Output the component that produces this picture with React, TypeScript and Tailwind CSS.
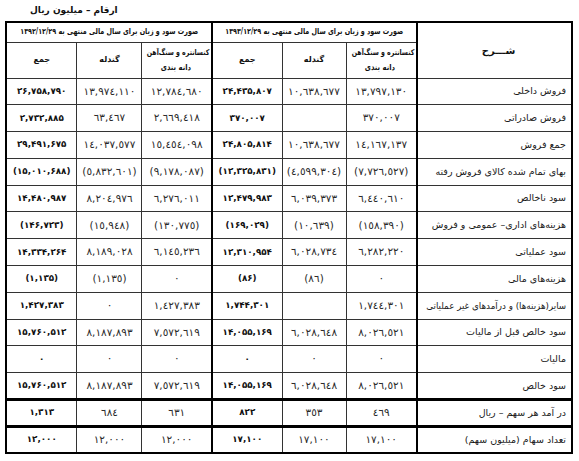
import React from "react";

const AR = "٠١٢٣٤٥٦٧٨٩";
const FA = "۰۱۲۳۴۵۶۷۸۹";
const toAr = (s: string) => s.replace(/[0-9]/g, (d) => AR[+d]);
const toFa = (s: string) => s.replace(/[0-9]/g, (d) => FA[+d]);

type Row = { l: string; v: string[]; thick?: boolean; narrow?: boolean };

const rows: Row[] = [
  { l: "فروش داخلی", v: ["13,797,130", "10,638,677", "24,435,807", "12,784,680", "13,974,110", "26,758,790"] },
  { l: "فروش صادراتی", v: ["370,007", "", "370,007", "2,669,418", "63,467", "2,732,885"] },
  { l: "جمع فروش", v: ["14,167,137", "10,638,677", "24,805,814", "15,454,098", "14,037,577", "29,491,675"] },
  { l: "بهای تمام شده کالای فروش رفته", v: ["(7,726,527)", "(4,599,304)", "(12,325,831)", "(9,178,087)", "(5,832,601)", "(15,010,688)"] },
  { l: "سود ناخالص", v: ["6,440,610", "6,039,373", "12,479,983", "6,276,011", "8,204,976", "14,480,987"] },
  { l: "هزینه‌های اداری– عمومی و فروش", v: ["(158,390)", "(10,639)", "(169,029)", "(130,775)", "(15,948)", "(146,723)"] },
  { l: "سود عملیاتی", v: ["6,282,220", "6,028,734", "12,310,954", "6,145,236", "8,189,028", "14,334,264"] },
  { l: "هزینه‌های مالی", v: ["0", "(86)", "(86)", "0", "(1,135)", "(1,135)"] },
  { l: "سایر(هزینه‌ها) و درآمدهای غیر عملیاتی", v: ["1,744,301", "", "1,744,301", "1,427,383", "0", "1,427,383"], narrow: true },
  { l: "سود خالص قبل از مالیات", v: ["8,026,521", "6,028,648", "14,055,169", "7,572,619", "8,187,893", "15,760,512"] },
  { l: "مالیات", v: ["0", "0", "0", "0", "0", "0"] },
  { l: "سود خالص", v: ["8,026,521", "6,028,648", "14,055,169", "7,572,619", "8,187,893", "15,760,512"] },
  { l: "در آمد هر سهم – ریال", v: ["469", "353", "822", "631", "684", "1,313"], thick: true },
  { l: "تعداد سهام (میلیون سهم)", v: ["17,100", "17,100", "17,100", "12,000", "12,000", "12,000"], thick: true },
];

const font = { fontFamily: '"DejaVu Sans", sans-serif' };

function SubHead() {
  return (
    <>
      <th className="border border-[#333] pr-[2px] align-middle font-bold text-[8px] leading-[15px] text-[#111] text-right whitespace-nowrap">
        <div>
          <span className="inline-block scale-x-[0.78] origin-right">کنسانتره و سنگ‌آهن</span>
        </div>
        <div className="text-center">
          <span className="inline-block scale-x-[0.85]">دانه بندی</span>
        </div>
      </th>
      <th className="border border-[#333] align-middle font-bold text-[8px] text-[#111]">گندله</th>
    </>
  );
}

function GroupHead({ date, divider }: { date: string; divider?: boolean }) {
  return (
    <th
      colSpan={3}
      className={
        "border border-[#333] font-bold text-[8px] whitespace-nowrap overflow-hidden p-0" +
        (divider ? " border-l-2 border-l-black" : "")
      }
    >
      <div className="flex justify-center">
        <span className="shrink-0 inline-block scale-x-[0.8]">
          صورت سود و زیان برای سال مالی منتهی به {date}
        </span>
      </div>
    </th>
  );
}

export default function App() {
  return (
    <div className="w-[579px] h-[461px] bg-white text-[#111] overflow-hidden" style={font} dir="rtl">
      <div className="h-[21px] flex items-center" dir="ltr">
        <div className="w-[30px] shrink-0" />
        <span className="font-bold text-[9px]" dir="rtl">
          ارقام – میلیون ریال
        </span>
      </div>
      <table className="ml-[7px] mr-[6px] w-[566px] border-collapse table-fixed border-2 border-black">
        <colgroup>
          <col className="w-[155px]" />
          <col className="w-[71px]" />
          <col className="w-[64px]" />
          <col className="w-[70px]" />
          <col className="w-[70px]" />
          <col className="w-[65px]" />
          <col className="w-[71px]" />
        </colgroup>
        <thead>
          <tr className="h-[20px]">
            <th rowSpan={2} className="border border-[#333] border-l-2 border-l-black font-bold text-[10px] text-center pl-[8px]">
              شـــرح
            </th>
            <GroupHead date="۱۳۹۳/۱۲/۲۹" divider />
            <GroupHead date="۱۳۹۲/۱۲/۲۹" />
          </tr>
          <tr className="h-[36px]">
            <SubHead />
            <th className="border border-[#333] border-l-2 border-l-black font-bold text-[8px]">جمع</th>
            <SubHead />
            <th className="border border-[#333] font-bold text-[8px]">جمع</th>
          </tr>
        </thead>
        <tbody>
          {rows.map((r, i) => {
            const t = r.thick ? " border-t-[3px] border-t-black" : "";
            return (
              <tr key={i} className="h-[26.8px]">
                <td className={"border border-[#333] border-l-2 border-l-black pr-[5px] text-right text-[9.5px] whitespace-nowrap text-[#1a1a1a]" + t}>
                  {r.narrow ? (
                    <span className="inline-block scale-x-[0.92] origin-right">{r.l}</span>
                  ) : (
                    r.l
                  )}
                </td>
                {r.v.map((v, j) => {
                  const bold = j === 2 || j === 5;
                  return (
                    <td
                      key={j}
                      dir="ltr"
                      className={
                        "border border-[#333] text-center whitespace-nowrap " +
                        (j === 2 ? "border-l-2 border-l-black " : "") +
                        (bold ? "font-bold text-[8.75px] text-[#111]" : "text-[10.5px] text-[#2a2a2a]") +
                        t
                      }
                    >
                      {bold ? toFa(v) : toAr(v)}
                    </td>
                  );
                })}
              </tr>
            );
          })}
        </tbody>
      </table>
    </div>
  );
}
